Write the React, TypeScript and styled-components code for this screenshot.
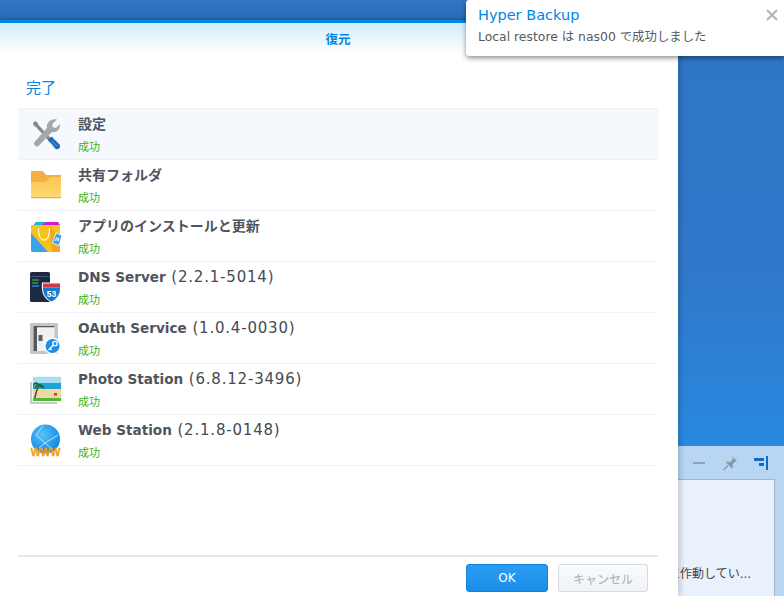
import React from "react";
import styled, { createGlobalStyle } from "styled-components";

const GlobalStyle = createGlobalStyle`
  html, body { margin: 0; padding: 0; width: 784px; height: 596px; overflow: hidden; }
  body { font-family: "DejaVu Sans", "Noto Sans CJK JP", sans-serif; }
`;

const Desktop = styled.div`
  position: relative;
  width: 784px;
  height: 596px;
  overflow: hidden;
  display: flex;
  flex-direction: column;
  background: #2f75c4;
`;
const TopBar = styled.div`
  height: 20px;
  flex: none;
  background: linear-gradient(#2f76c6, #2c6cb8 85%, #28609f);
`;
const Main = styled.div`
  flex: 1;
  display: flex;
  min-height: 0;
`;
const Dialog = styled.div`
  width: 678px;
  flex: none;
  display: flex;
  flex-direction: column;
  background: #fff;
  border-top: 3px solid #0086e5;
  box-sizing: border-box;
  box-shadow: 2px 0 6px rgba(0, 0, 0, 0.2);
  position: relative;
  z-index: 1;
`;
const DialogHeader = styled.div`
  height: 32px;
  flex: none;
  background: linear-gradient(#d5ecfb, #ffffff);
  display: flex;
  justify-content: center;
  align-items: center;
  color: #0086e5;
  font-size: 12.5px;
  font-weight: 700;
  padding: 0 2px 1px 0;
  box-sizing: border-box;
`;
const DoneLabel = styled.div`
  height: 53px;
  flex: none;
  box-sizing: border-box;
  padding: 21px 0 0 26px;
  font-size: 15px;
  line-height: 24px;
  color: #0086e5;
`;
const List = styled.div`
  margin: 0 20px 0 18px;
  border-top: 1px solid #eef1f5;
  flex: 1;
`;
const Row = styled.div<{ $active?: boolean }>`
  height: 51px;
  box-sizing: border-box;
  border-bottom: 1px solid #eef1f5;
  display: flex;
  align-items: center;
  gap: 14px;
  padding-left: 10px;
  background: ${(p) => (p.$active ? "#f5f9fd" : "#fff")};
`;
const IconBox = styled.svg`
  width: 36px;
  height: 36px;
  flex: none;
  display: block;
`;
const RowText = styled.div`
  display: flex;
  flex-direction: column;
  padding-top: 3px;
`;
const Title = styled.div`
  height: 24px;
  font-size: 15px;
  letter-spacing: 0.8px;
  line-height: 22px;
  color: #454a52;
  white-space: nowrap;
`;
const Name = styled.span<{ $cjk?: boolean }>`
  font-weight: 700;
  letter-spacing: 0;
  color: #4f555d;
  font-size: ${(p) => (p.$cjk ? "14px" : "13.6px")};
`;
const Status = styled.div`
  height: 22px;
  font-size: 11px;
  line-height: 22px;
  color: #3fae0c;
`;
const Footer = styled.div`
  margin: 0 20px 0 18px;
  border-top: 2px solid #e6e6e6;
  height: 41px;
  flex: none;
  box-sizing: border-box;
  display: flex;
  justify-content: flex-end;
  gap: 10px;
  padding: 7px 10px 0 0;
`;
const Button = styled.div<{ $primary?: boolean }>`
  height: 28px;
  box-sizing: border-box;
  border-radius: 3px;
  font-size: 12px;
  display: flex;
  align-items: center;
  justify-content: center;
  width: ${(p) => (p.$primary ? "82px" : "90px")};
  color: ${(p) => (p.$primary ? "#fff" : "#a9aeb5")};
  border: 1px solid ${(p) => (p.$primary ? "#0f84dc" : "#d4dbe3")};
  background: ${(p) =>
    p.$primary ? "linear-gradient(#2b9df2, #1a8ee8)" : "linear-gradient(#f9fbfd, #eff3f7)"};
`;
const Side = styled.div`
  flex: 1;
  display: flex;
  flex-direction: column;
  overflow: hidden;
`;
const SideBackdrop = styled.div`
  height: 426px;
  flex: none;
  background: linear-gradient(#2f75c4, #2f78ca 60%, #2989e0);
`;
const MiniWindow = styled.div`
  flex: 1;
  background: #b8d6f4;
  display: flex;
  flex-direction: column;
`;
const MiniToolbar = styled.div`
  height: 33px;
  flex: none;
  box-sizing: border-box;
  display: flex;
  align-items: center;
  padding: 0 0 0 14px;
  gap: 16px;
`;
const MiniContent = styled.div`
  flex: 1;
  margin-right: 9px;
  background: #e9f2fc;
  border: 1px solid #a9b4c2;
  border-left: none;
  border-bottom: none;
  box-sizing: border-box;
  padding-top: 85px;
  font-size: 12px;
  line-height: 18px;
  color: #444;
  white-space: nowrap;
  overflow: hidden;
`;
const ClippedText = styled.div`
  margin-left: -10px;
`;
const Toast = styled.div`
  position: absolute;
  left: 466px;
  top: 0;
  width: 318px;
  height: 56px;
  box-sizing: border-box;
  background: #fff;
  border-radius: 3px 0 0 3px;
  box-shadow: 0 2px 5px rgba(0, 0, 0, 0.45);
  padding: 6px 0 0 12px;
  z-index: 2;
`;
const ToastTitle = styled.div`
  font-size: 14.5px;
  line-height: 19px;
  color: #0086e5;
`;
const ToastBody = styled.div`
  margin-top: 3px;
  font-size: 12.4px;
  line-height: 18px;
  color: #555a60;
`;
const ToastClose = styled.svg`
  position: absolute;
  right: 6px;
  top: 9px;
  width: 12px;
  height: 12px;
`;

const WrenchIcon = () => (
  <IconBox viewBox="0 0 36 36">
    <path d="M5 7l2-2 2.500 1.500 1 2.500 14 15-2.500 2.500L8 11 5.500 9.500z" fill="#85898e" />
    <path d="M29 3.500l-4.500 4v3.500l3.500 1 4-4c.5 5-3 9-8 8L11 29.500c-2 2.500-6.500-.5-4.500-3.500L19 12c-1-5 4-10 10-8.500z" fill="#a4a8ae" />
    <path d="M20 24l3.500-3.500 8 8c1 1.500.5 3-.5 4-1.500 1-3 .8-4 0z" fill="#1a66b8" />
    <path d="M23.500 24l6 6.500M21.800 25.500l5.500 6" stroke="#5f9ddb" strokeWidth="1" />
  </IconBox>
);

const FolderIcon = () => (
  <IconBox viewBox="0 0 36 36">
    <defs>
      <linearGradient id="folderFront" x1="0" y1="0" x2="0" y2="1">
        <stop offset="0" stopColor="#fbc655" />
        <stop offset="1" stopColor="#ffd970" />
      </linearGradient>
    </defs>
    <path d="M3 5a1 1 0 0 1 1-1h11l3 4h15v8H3z" fill="#f0b043" />
    <path d="M3 15h15l4-5h11v20H3z" fill="url(#folderFront)" />
    <path d="M3 30h30v1.300H3z" fill="#c9b58a" />
  </IconBox>
);

const BagIcon = () => (
  <IconBox viewBox="0 0 36 36">
    <path d="M6 7l2-3h22l2 3z" fill="#d316d8" />
    <path d="M5 8l3-4 10 0-6 4z" fill="#19b8dc" />
    <rect x="3" y="7" width="29" height="27" rx="1" fill="#f7c21b" />
    <path d="M3 15l17 19H5a2 2 0 0 1-2-2z" fill="#3aa2ea" />
    <path d="M21 7l11 14v13H24z" fill="#f29b2e" opacity=".75" />
    <path d="M10.500 10c0 9 2.500 12 5.500 12s5.500-3 5.500-12" fill="none" stroke="#fff3d0" strokeWidth="1.300" />
    <path d="M28 15l6 2.500-3 10-6.500-2.500z" fill="#3aa2ea" stroke="#fff" strokeWidth=".8" />
    <path d="M27.500 23l1-3.500 1.500 3.500 1-3.500" fill="none" stroke="#fff" strokeWidth=".9" />
  </IconBox>
);

const DnsIcon = () => (
  <IconBox viewBox="0 0 36 36">
    <rect x="2" y="3" width="20" height="30" rx="1.500" fill="#1e2a44" />
    <path d="M2 7.500h20" stroke="#46536e" strokeWidth="1" />
    <path d="M4 11h7M4 14h6" stroke="#3fc46a" strokeWidth="1.200" />
    <path d="M4 17h7" stroke="#2f9be8" strokeWidth="1.200" />
    <path d="M14 13.500h19c1 9-1 16-9.500 20-8.500-4-10.500-11-9.500-20z" fill="#f4f6f8" />
    <path d="M15 14.500h17v4H15z" fill="#cf3a44" />
    <path d="M15 18.500h17c0 6-2 10.500-8.500 14-6.500-3.500-8.500-8-8.500-14z" fill="#1978c8" />
    <text x="23.500" y="28" fontSize="8.500" fontWeight="700" fill="#fff" textAnchor="middle" fontFamily="Liberation Sans, sans-serif">53</text>
  </IconBox>
);

const OauthIcon = () => (
  <IconBox viewBox="0 0 36 36">
    <rect x="2" y="3" width="28" height="31" rx="1" fill="#c4c6c9" />
    <rect x="5.500" y="6" width="21" height="25" fill="#f1f1f1" />
    <path d="M5.500 6h21v1.200H9V31H5.500z" fill="#55595e" />
    <rect x="10.500" y="15" width="4" height="6" fill="#5b5f64" />
    <circle cx="24.500" cy="26" r="8.500" fill="#fff" />
    <circle cx="24.500" cy="26" r="7" fill="#1f8fe6" />
    <circle cx="27" cy="23.500" r="2.200" fill="none" stroke="#fff" strokeWidth="1.300" />
    <path d="M25.500 25l-5 5M21.500 28l2 2" stroke="#fff" strokeWidth="1.300" />
  </IconBox>
);

const PhotoIcon = () => (
  <IconBox viewBox="0 0 36 36">
    <rect x="2" y="11" width="27" height="22" fill="#c4cdd6" />
    <rect x="4" y="5" width="30" height="26" fill="#f2f5f8" />
    <rect x="5" y="6" width="28" height="7" fill="#a5def5" />
    <rect x="5" y="12" width="28" height="6" fill="#1fa2d0" />
    <rect x="5" y="18" width="28" height="9" fill="#f0d9a0" />
    <rect x="5" y="27" width="28" height="3" fill="#55b82e" />
    <path d="M6 27c1-5 2.500-10 4.500-13l1.200 1c-2 3-3 7-4 12z" fill="#6a4c2c" />
    <path d="M11 13c-2.500-3-5.500-2-6 1 2-1.500 3.500-1 5-.5-2 1-3.500 2.500-3.500 4.500 2-1.500 3.500-3 4.500-4 1 2 3 3.500 5.500 3.500-.5-3-3-4.500-5.500-4.500z" fill="#17692a" />
    <rect x="26" y="22" width="3" height="2.500" fill="#d9342b" />
  </IconBox>
);

const GlobeIcon = () => (
  <IconBox viewBox="0 0 36 36">
    <defs>
      <radialGradient id="globeFill" cx="0.4" cy="0.35" r="0.7">
        <stop offset="0" stopColor="#58c3f7" />
        <stop offset="1" stopColor="#0b84e2" />
      </radialGradient>
    </defs>
    <circle cx="17.500" cy="17" r="14.500" fill="url(#globeFill)" />
    <path d="M8 13l9 8 13-8M17 21l6 5M8 13l7-9M17 21l-6 5" stroke="#d6f0ff" strokeWidth=".8" fill="none" />
    <text x="17.500" y="33.500" fontSize="10.500" fontWeight="700" fill="#f0a00c" stroke="#f0a00c" strokeWidth=".3" textAnchor="middle" fontFamily="Liberation Sans, sans-serif">WWW</text>
  </IconBox>
);

const rows: { icon: React.ReactNode; name: string; version?: string; active?: boolean }[] = [
  { icon: <WrenchIcon />, name: "設定", active: true },
  { icon: <FolderIcon />, name: "共有フォルダ" },
  { icon: <BagIcon />, name: "アプリのインストールと更新" },
  { icon: <DnsIcon />, name: "DNS Server", version: "(2.2.1-5014)" },
  { icon: <OauthIcon />, name: "OAuth Service", version: "(1.0.4-0030)" },
  { icon: <PhotoIcon />, name: "Photo Station", version: "(6.8.12-3496)" },
  { icon: <GlobeIcon />, name: "Web Station", version: "(2.1.8-0148)" },
];

export default function App() {
  return (
    <Desktop>
      <GlobalStyle />
      <TopBar />
      <Main>
        <Dialog>
          <DialogHeader>復元</DialogHeader>
          <DoneLabel>完了</DoneLabel>
          <List>
            {rows.map((r) => (
              <Row key={r.name} $active={r.active}>
                {r.icon}
                <RowText>
                  <Title>
                    <Name $cjk={!r.version}>{r.name}</Name>
                    {r.version ? ` ${r.version}` : ""}
                  </Title>
                  <Status>成功</Status>
                </RowText>
              </Row>
            ))}
          </List>
          <Footer>
            <Button $primary>OK</Button>
            <Button>キャンセル</Button>
          </Footer>
        </Dialog>
        <Side>
          <SideBackdrop />
          <MiniWindow>
            <MiniToolbar>
              <svg width="14" height="14" viewBox="0 0 14 14">
                <rect x="1" y="6" width="12" height="2" fill="#8fa3b8" />
              </svg>
              <svg width="16" height="16" viewBox="0 0 16 16">
                <path d="M10 1l5 5-1.500.5-3 3 .5 3-1 1-6-6 1-1 3 .5 3-3z" fill="#8a99aa" />
                <path d="M6 10.500L1.500 15" stroke="#8a99aa" strokeWidth="1.500" />
              </svg>
              <svg width="14" height="14" viewBox="0 0 14 14">
                <path d="M0 2h10v3H0zM5 7h5v3H5zM12 0h2v14h-2z" fill="#0b6ec4" />
              </svg>
            </MiniToolbar>
            <MiniContent>
              <ClippedText>に作動してい...</ClippedText>
            </MiniContent>
          </MiniWindow>
        </Side>
      </Main>
      <Toast>
        <ToastTitle>Hyper Backup</ToastTitle>
        <ToastBody>Local restore は nas00 で成功しました</ToastBody>
        <ToastClose viewBox="0 0 12 12">
          <path d="M1 1l10 10M11 1L1 11" stroke="#b3b3b3" strokeWidth="2" />
        </ToastClose>
      </Toast>
    </Desktop>
  );
}
